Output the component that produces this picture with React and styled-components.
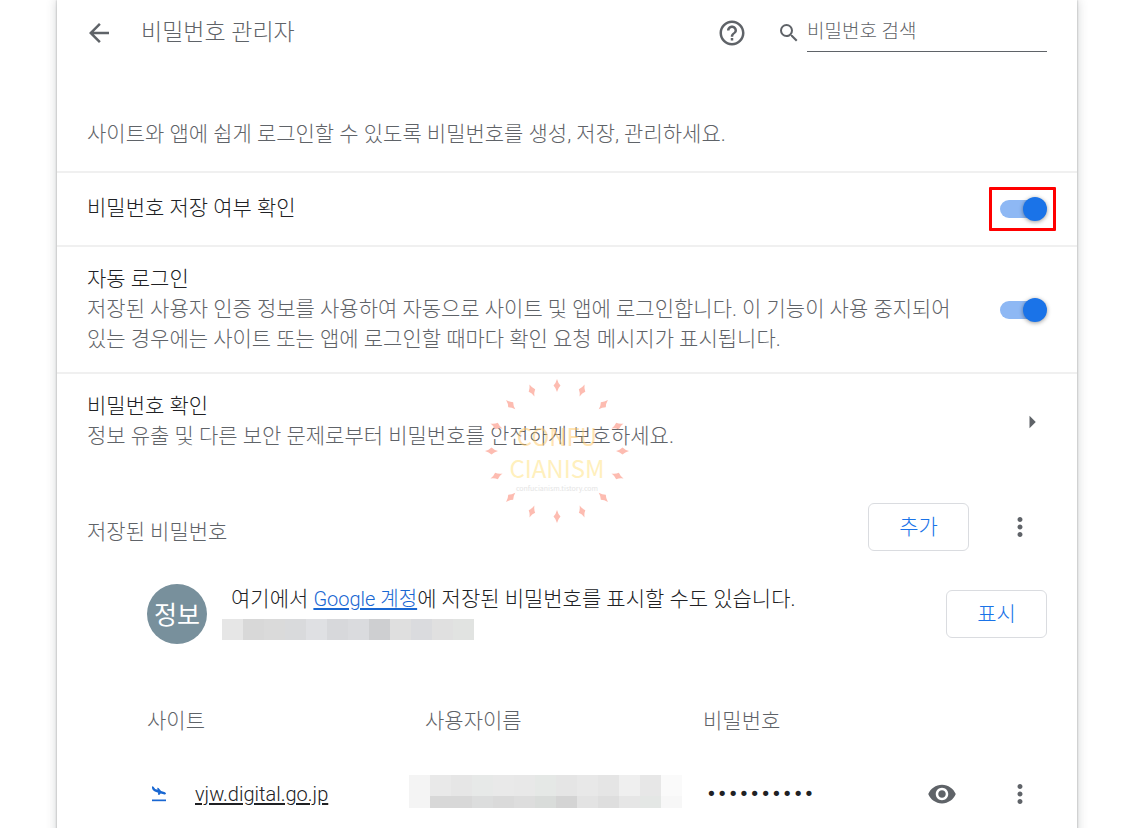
import React, { useState } from 'react';
import styled, { createGlobalStyle } from 'styled-components';
import {
    MdArrowBack,
    MdArrowRight,
    MdHelpOutline,
    MdMoreVert,
    MdSearch,
    MdVisibility,
} from 'react-icons/md';

const accountBlocks = [
    '#e6e6e6', '#d8d8d8', '#dadada', '#d9dadc', '#dfe0e3', '#d7d8db',
    '#dadbde', '#cecfd1', '#dfdfdf', '#dadbde', '#e0e0e0', '#e1e3e1',
];

const userBlocksTop = [
    '#f4f4f4', '#e9e9e9', '#e6e6e6', '#e7e9e8', '#e9e9e9', '#e8e8e8', '#e5e8e6',
    '#e5e5e5', '#e8e8e8', '#e5e5e5', '#efefef', '#e7e7e7', '#fafafa',
];

const userBlocksBottom = [
    '#f4f4f4', '#d8d8d8', '#d8d8d8', '#dcdddd', '#dadada', '#dddddd', '#d9dcda',
    '#d4d4d4', '#e3e3e3', '#dedede', '#e6e6e6', '#e4e7e5', '#f7f7f7',
];

const rays = Array.from({ length: 16 }, (_, i) => i * 22.5);

const Blocks = ({ colors, height }) => (
    <BlockRow>
        {colors.map((color, i) => (
            <Block key={i} $color={color} $height={height} />
        ))}
    </BlockRow>
);

const Toggle = ({ id }) => {
    const [on, setOn] = useState(true);
    return (
        <Switch
            id={id}
            type="checkbox"
            role="switch"
            checked={on}
            onChange={() => setOn(!on)}
        />
    );
};

const PlaneIcon = () => (
    <svg width="14" height="16" viewBox="0 0 14 16" fill="currentColor" aria-hidden="true">
        <path d="M0 .3l1.500 .4 1.700 2.400 2.400 .7L5.200 1.700l1.300 .4 2.600 2.900 3.200 1c1.100 .4 1.800 1 1.600 1.800-.3 .7-1.200 .7-2.300 .4L8.700 7.400 7.200 8.900 5.900 8.500 6.200 6.700 2.800 5.400C1.200 4.700 .2 3.600 0 2z" />
        <rect x="0" y="13.500" width="14" height="1.700" />
    </svg>
);

const Watermark = () => (
    <Mark viewBox="0 0 144 144" aria-hidden="true">
        {rays.map((angle) => (
            <path
                key={angle}
                d="M72 0Q73 4 75.500 6.500Q73 9 72 13Q71 9 68.500 6.500Q71 4 72 0Z"
                fill="#fdbcb1"
                transform={`rotate(${angle} 72 72)`}
            />
        ))}
        <MarkText x="72" y="67" $size={24} $fill="rgba(255, 200, 100, 0.5)">CONFU</MarkText>
        <MarkText x="72" y="99" $size={24} $fill="#fff0bd">CIANISM</MarkText>
        <MarkText x="72" y="112" $size={7} $fill="#e4e4e4">confucianism.tistory.com</MarkText>
    </Mark>
);

const App = () => {
    return (
        <Page>
            <GlobalStyle />
            <Card>
                <Header>
                    <IconButton aria-label="뒤로"><MdArrowBack size={30} /></IconButton>
                    <Title>비밀번호 관리자</Title>
                    <IconButton aria-label="도움말"><MdHelpOutline size={30} /></IconButton>
                    <SearchBox>
                        <MdSearch size={24} />
                        <SearchInput type="search" placeholder="비밀번호 검색" aria-label="비밀번호 검색" />
                    </SearchBox>
                </Header>

                <Intro>사이트와 앱에 쉽게 로그인할 수 있도록 비밀번호를 생성, 저장, 관리하세요.</Intro>

                <Row $height={74}>
                    <RowText>
                        <Label htmlFor="offer-save">비밀번호 저장 여부 확인</Label>
                    </RowText>
                    <Highlighted>
                        <Toggle id="offer-save" />
                    </Highlighted>
                </Row>

                <Row $height={127}>
                    <RowText>
                        <Label htmlFor="auto-login">자동 로그인</Label>
                        <Sub>저장된 사용자 인증 정보를 사용하여 자동으로 사이트 및 앱에 로그인합니다. 이 기능이 사용 중지되어 있는 경우에는 사이트 또는 앱에 로그인할 때마다 확인 요청 메시지가 표시됩니다.</Sub>
                    </RowText>
                    <Toggle id="auto-login" />
                </Row>

                <Row $height={98}>
                    <RowText>
                        <Label as="span">비밀번호 확인</Label>
                        <Sub>정보 유출 및 다른 보안 문제로부터 비밀번호를 안전하게 보호하세요.</Sub>
                    </RowText>
                    <IconButton aria-label="비밀번호 확인"><MdArrowRight size={30} /></IconButton>
                    <Watermark />
                </Row>

                <SavedHead>
                    <SavedTitle>저장된 비밀번호</SavedTitle>
                    <Button>추가</Button>
                    <MenuButton aria-label="추가 작업"><MdMoreVert size={30} /></MenuButton>
                </SavedHead>

                <Account>
                    <Avatar>정보</Avatar>
                    <AccountText>
                        <AccountLine>여기에서 <Link href="#account">Google 계정</Link>에 저장된 비밀번호를 표시할 수도 있습니다.</AccountLine>
                        <Blocks colors={accountBlocks} height={21} />
                    </AccountText>
                    <Button>표시</Button>
                </Account>

                <Table>
                    <thead>
                        <tr>
                            <Th>사이트</Th>
                            <Th>사용자이름</Th>
                            <Th $wide>비밀번호</Th>
                        </tr>
                    </thead>
                    <tbody>
                        <tr>
                            <Td>
                                <Site>
                                    <PlaneIcon />
                                    <SiteLink href="#site">vjw.digital.go.jp</SiteLink>
                                </Site>
                            </Td>
                            <Td>
                                <Hidden>
                                    <Blocks colors={userBlocksTop} height={21} />
                                    <Blocks colors={userBlocksBottom} height={12} />
                                </Hidden>
                            </Td>
                            <Td>
                                <Secret>
                                    <Password type="password" value="0000000000" readOnly aria-label="비밀번호" />
                                    <IconButton aria-label="비밀번호 표시"><MdVisibility size={30} /></IconButton>
                                    <MenuButton aria-label="추가 작업"><MdMoreVert size={30} /></MenuButton>
                                </Secret>
                            </Td>
                        </tr>
                    </tbody>
                </Table>
            </Card>
        </Page>
    );
};

const GlobalStyle = createGlobalStyle`
    * {
        box-sizing: border-box;
    }
    body {
        margin: 0;
        background: #fff;
        color: #202124;
        font-family: Roboto, "Noto Sans CJK KR", sans-serif;
        font-size: 21px;
        font-weight: 300;
        line-height: 30px;
    }
    button, input {
        font: inherit;
    }
    button {
        cursor: pointer;
    }
`;

const Page = styled.div`
    padding: 0 60px 0 57px;
    overflow: hidden;
`;

const Card = styled.main`
    min-height: 100vh;
    background: #fff;
    box-shadow: 0 0 2px rgba(60, 64, 67, 0.4), 0 0 10px rgba(60, 64, 67, 0.25);
`;

const Header = styled.header`
    display: flex;
    align-items: center;
    height: 66px;
    padding: 0 30px 0 27px;
    color: #5f6368;
`;

const Title = styled.h1`
    flex: 1;
    margin: 0 0 0 27px;
    font-size: 23px;
    font-weight: 300;
`;

const IconButton = styled.button`
    display: flex;
    padding: 0;
    border: 0;
    background: none;
    color: #5f6368;
`;

const MenuButton = styled(IconButton)`
    margin: 0 12px 0 36px;
`;

const SearchBox = styled.div`
    display: flex;
    align-items: center;
    gap: 6px;
    margin-left: 30px;
`;

const SearchInput = styled.input`
    width: 240px;
    height: 38px;
    padding: 0 0 2px;
    border: 0;
    border-bottom: 1px solid #5f6368;
    outline: none;
    background: none;
    color: #202124;
    font-size: 19px;

    &::placeholder {
        color: #5f6368;
        opacity: 1;
    }
`;

const Intro = styled.p`
    margin: 0;
    padding: 53px 30px 22px;
    color: #5f6368;
`;

const Row = styled.section`
    position: relative;
    display: flex;
    align-items: center;
    min-height: ${({ $height }) => $height}px;
    padding: 0 30px;
    border-top: 2px solid #f0f0f0;
`;

const RowText = styled.div`
    flex: 1;
    padding-bottom: 2px;
    margin-right: 42px;
`;

const Label = styled.label`
    display: block;
`;

const Sub = styled.p`
    margin: 0;
    color: #5f6368;
`;

const Switch = styled.input`
    appearance: none;
    position: relative;
    flex: none;
    width: 48px;
    height: 24px;
    margin: 0;
    cursor: pointer;

    &::before {
        content: '';
        position: absolute;
        top: 3px;
        left: 1px;
        width: 42px;
        height: 18px;
        border-radius: 9px;
        background: #bdc1c6;
    }
    &::after {
        content: '';
        position: absolute;
        top: 0;
        left: 0;
        width: 24px;
        height: 24px;
        border-radius: 50%;
        background: #fff;
        box-shadow: 0 1px 4px rgba(0, 0, 0, 0.4);
    }
    &:checked::before {
        background: #8eb8f4;
    }
    &:checked::after {
        left: 24px;
        background: #1a73e8;
    }
`;

const Highlighted = styled.div`
    position: relative;
    display: flex;

    &::after {
        content: '';
        position: absolute;
        inset: -10px -9px -10px -10px;
        border: 3px solid #f00;
        border-radius: 1px;
        pointer-events: none;
    }
`;

const Mark = styled.svg`
    position: absolute;
    top: 5px;
    left: 42%;
    width: 144px;
    height: 144px;
    pointer-events: none;
`;

const MarkText = styled.text`
    fill: ${({ $fill }) => $fill};
    font-family: "Noto Sans CJK KR", sans-serif;
    font-size: ${({ $size }) => $size}px;
    font-weight: 400;
    text-anchor: middle;
`;

const SavedHead = styled.div`
    display: flex;
    align-items: center;
    padding: 33px 30px 0;
`;

const SavedTitle = styled.h2`
    flex: 1;
    margin: 10px 0 0;
    color: #5f6368;
    font-size: 21px;
    font-weight: 300;
`;

const Button = styled.button`
    width: 101px;
    height: 48px;
    padding: 0;
    border: 1px solid #dadce0;
    border-radius: 6px;
    background: #fff;
    color: #1a73e8;
`;

const Account = styled.div`
    display: flex;
    align-items: center;
    padding: 33px 30px 0 90px;
`;

const Avatar = styled.div`
    width: 60px;
    height: 60px;
    padding-top: 2px;
    border-radius: 50%;
    background: #78909c;
    color: #fff;
    font-size: 25px;
    font-weight: 400;
    line-height: 60px;
    text-align: center;
`;

const AccountText = styled.div`
    flex: 1;
    padding: 0 0 4px 15px;
`;

const AccountLine = styled.p`
    margin: 0 0 5px 9px;
`;

const Link = styled.a`
    color: #1967d2;
    font-size: 20px;
    text-underline-offset: 2px;
`;

const BlockRow = styled.div`
    display: flex;
`;

const Block = styled.span`
    width: 21px;
    height: ${({ $height }) => $height}px;
    background: ${({ $color }) => $color};
`;

const Table = styled.table`
    width: calc(100% - 120px);
    margin: 51px 30px 0 90px;
    border-collapse: collapse;
    table-layout: fixed;
`;

const Th = styled.th`
    width: ${({ $wide }) => ($wide ? 'auto' : '278px')};
    height: 48px;
    padding: 4px 0 0;
    color: #5f6368;
    font-weight: 300;
    text-align: left;
`;

const Td = styled.td`
    height: 102px;
    padding: 0;
`;

const Site = styled.div`
    display: flex;
    align-items: center;
    gap: 29px;
    padding-left: 5px;
    color: #1967d2;
`;

const SiteLink = styled.a`
    color: #202124;
    font-size: 20px;
    text-underline-offset: 2px;
`;

const Hidden = styled.div`
    margin-left: -16px;
    padding-bottom: 6px;
`;

const Secret = styled.div`
    display: flex;
    align-items: center;
    gap: 12px;
`;

const Password = styled.input`
    flex: 1;
    min-width: 0;
    padding: 0 0 0 3px;
    border: 0;
    outline: none;
    background: none;
    color: #202124;
    font-family: "DejaVu Sans Mono", monospace;
    font-size: 18px;
`;

export default App;
